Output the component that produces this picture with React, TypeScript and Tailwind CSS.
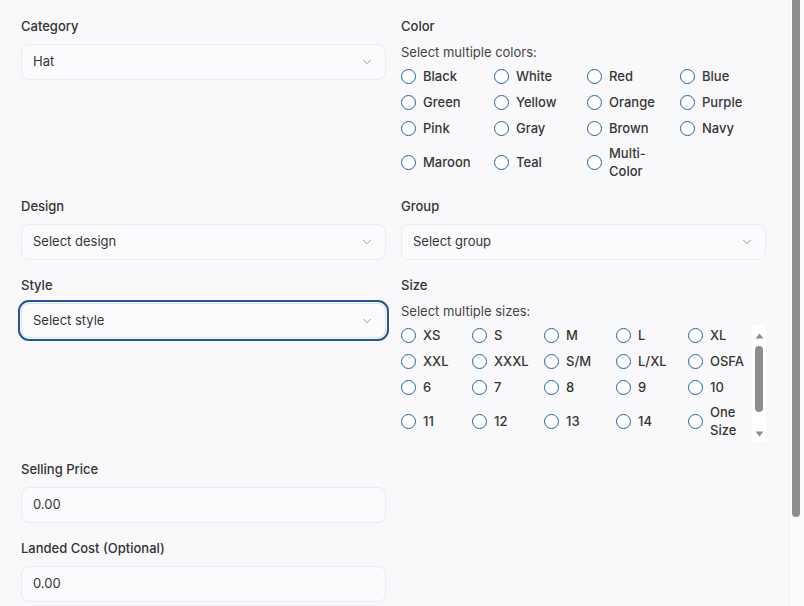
import { ChevronDown } from "lucide-react";

const colors = [
  "Black", "White", "Red", "Blue",
  "Green", "Yellow", "Orange", "Purple",
  "Pink", "Gray", "Brown", "Navy",
  "Maroon", "Teal", "Multi-Color",
];

const sizes = [
  "XS", "S", "M", "L", "XL",
  "XXL", "XXXL", "S/M", "L/XL", "OSFA",
  "6", "7", "8", "9", "10",
  "11", "12", "13", "14", "One Size",
];

function Label({ children }: { children: React.ReactNode }) {
  return (
    <div className="text-[13px] leading-[20px] font-medium text-[#333]">
      {children}
    </div>
  );
}

function SelectBox({ value, focused }: { value: string; focused?: boolean }) {
  return (
    <div
      className={
        focused
          ? "mt-2 h-[35px] flex items-center justify-between pl-[11px] pr-[11px] rounded-lg border border-[#dbe3ee] bg-[#fbfbfd] outline-2 outline-offset-[1px] outline-[#1d5a99]"
          : "mt-2 h-[36px] flex items-center justify-between pl-[11px] pr-[11px] rounded-lg border border-[#eaecf1] bg-[#fbfbfd]"
      }
    >
      <span className="text-[13px] text-[#353535]">{value}</span>
      <ChevronDown size={14} strokeWidth={1.5} className="text-[#8f8f96]" />
    </div>
  );
}

function TextBox({ value }: { value: string }) {
  return (
    <div className="mt-2 h-[36px] flex items-center pl-[11px] rounded-lg border border-[#eaecf1] bg-[#fbfbfd]">
      <span className="text-[13px] text-[#353535]">{value}</span>
    </div>
  );
}

function Radio({ label }: { label: string }) {
  return (
    <div className="flex items-center gap-[7px] min-h-[20px] pr-2">
      <span className="w-[15px] h-[15px] shrink-0 rounded-full border-[1.5px] border-[#2462a5] bg-white" />
      <span className="text-[13px] leading-[18px] font-medium text-[#363636]">{label}</span>
    </div>
  );
}

export default function App() {
  return (
    <div className="h-[606px] flex bg-[#f9f9fb] overflow-hidden font-['Inter',sans-serif]">
      <div className="flex-1 pl-[21px] pt-[16px]">
        <div className="grid grid-cols-[365px_365px] gap-x-[15px] gap-y-4 w-[745px] items-start">
          {/* Category */}
          <div>
            <Label>Category</Label>
            <SelectBox value="Hat" />
          </div>

          {/* Color */}
          <div>
            <Label>Color</Label>
            <div className="mt-1.5 text-[13px] leading-[20px] text-[#444]">Select multiple colors:</div>
            <div className="mt-1 grid grid-cols-[93px_93px_93px_1fr] gap-y-[6px] items-center">
              {colors.map((c) => (
                <Radio key={c} label={c} />
              ))}
            </div>
          </div>

          {/* Design */}
          <div>
            <Label>Design</Label>
            <SelectBox value="Select design" />
          </div>

          {/* Group */}
          <div>
            <Label>Group</Label>
            <SelectBox value="Select group" />
          </div>

          {/* Style */}
          <div className="-mt-px">
            <Label>Style</Label>
            <SelectBox value="Select style" focused />
          </div>

          {/* Size */}
          <div className="-mt-px">
            <Label>Size</Label>
            <div className="mt-1.5 text-[13px] leading-[20px] text-[#444]">Select multiple sizes:</div>
            <div className="mt-1 h-[117px] flex overflow-hidden">
              <div className="flex-1 grid grid-cols-[71px_72px_72px_72px_1fr] gap-y-[6px] items-center content-start">
                {sizes.map((s) => (
                  <Radio key={s} label={s} />
                ))}
              </div>
              {/* inner scrollbar */}
              <div className="w-[15px] bg-white flex flex-col items-center">
                <div className="h-[21px] flex items-center justify-center">
                  <svg width="9" height="6" viewBox="0 0 9 6">
                    <path d="M4.5 0.5 L8.5 5.5 L0.5 5.5 Z" fill="#8d8d8d" />
                  </svg>
                </div>
                <div className="w-[8px] h-[66px] rounded-full bg-[#8d8d8d]" />
                <div className="flex-1" />
                <div className="h-[16px] flex items-center justify-center">
                  <svg width="9" height="6" viewBox="0 0 9 6">
                    <path d="M0.5 0.5 L8.5 0.5 L4.5 5.5 Z" fill="#8d8d8d" />
                  </svg>
                </div>
              </div>
            </div>
          </div>

          {/* Selling Price */}
          <div className="mt-px">
            <Label>Selling Price</Label>
            <TextBox value="0.00" />
          </div>
          <div />

          {/* Landed Cost */}
          <div className="-mt-px">
            <Label>Landed Cost (Optional)</Label>
            <TextBox value="0.00" />
          </div>
          <div />
        </div>
      </div>

      {/* page scrollbar */}
      <div className="w-[15px] bg-[#fbfbfb] border-l border-[#eeeeee] pl-[2px]">
        <div className="w-[8px] h-[517px] rounded-b-full bg-[#8c8c8c]" />
      </div>
    </div>
  );
}
